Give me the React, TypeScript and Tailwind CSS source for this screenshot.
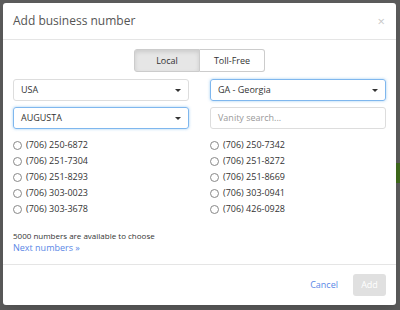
import React from "react";

const left = ["(706) 250-6872", "(706) 251-7304", "(706) 251-8293", "(706) 303-0023", "(706) 303-3678"];
const right = ["(706) 250-7342", "(706) 251-8272", "(706) 251-8669", "(706) 303-0941", "(706) 426-0928"];

const Caret = () => (
  <svg width="6" height="3" viewBox="0 0 6 3" className="shrink-0">
    <path d="M0 0h6L3 3z" fill="#333" />
  </svg>
);

const NumberList = ({ items }: { items: string[] }) => (
  <div className="flex flex-col">
    {items.map((n) => (
      <label key={n} className="flex items-center h-4 gap-[4px] text-[9px] text-[#333]">
        <span className="w-[9px] h-[9px] rounded-full border border-[#888] bg-white" />
        {n}
      </label>
    ))}
  </div>
);

export default function App() {
  return (
    <div className="w-[400px] h-[310px] bg-[#5b5b5b] relative overflow-hidden" style={{ fontFamily: "'Open Sans', sans-serif" }}>
      <div className="absolute right-0 top-[163px] w-[4px] h-[20px] bg-[#3f6a1c]" />
      <div className="absolute left-[3px] top-[3px] w-[393px] h-[302px] bg-white rounded-[3px] flex flex-col shadow-lg">
        <div className="h-[37px] flex items-center justify-between pl-[10px] pr-[11px] border-b border-[#e5e5e5]">
          <h2 className="text-[12px] text-[#555]">Add business number</h2>
          <span className="text-[13px] leading-none text-[#c8c8c8]">×</span>
        </div>
        <div className="flex-1 px-[10px] pt-[9px]">
          <div className="flex justify-center">
            <div className="flex h-[23px] text-[9px] text-[#333]">
              <button className="w-[66px] rounded-l-[3px] border border-[#ccc] bg-[#e6e6e6] shadow-[inset_0_2px_4px_rgba(0,0,0,0.12)]">Local</button>
              <button className="w-[65px] rounded-r-[3px] border border-l-0 border-[#ccc] bg-white">Toll-Free</button>
            </div>
          </div>
          <div className="grid grid-cols-2 gap-x-[21px] gap-y-[6px] mt-[7px]">
            <div className="h-[22px] rounded-[3px] border border-[#ddd] flex items-center justify-between px-[7px] text-[9px] text-[#333]">
              USA <Caret />
            </div>
            <div className="h-[22px] rounded-[3px] border border-[#7fb7ee] shadow-[0_0_3px_rgba(102,175,233,0.6)] flex items-center justify-between px-[7px] text-[9px] text-[#333]">
              GA - Georgia <Caret />
            </div>
            <div className="h-[22px] rounded-[3px] border border-[#7fb7ee] shadow-[0_0_3px_rgba(102,175,233,0.6)] flex items-center justify-between px-[7px] text-[9px] text-[#333]">
              AUGUSTA <Caret />
            </div>
            <div className="h-[22px] rounded-[3px] border border-[#ddd] flex items-center px-[7px] text-[9px] text-[#999]">
              Vanity search...
            </div>
          </div>
          <div className="grid grid-cols-2 gap-x-[21px] mt-[8px]">
            <NumberList items={left} />
            <NumberList items={right} />
          </div>
          <p className="mt-[13px] text-[8px] leading-[12px] text-[#333]">5000 numbers are available to choose</p>
          <a className="block text-[9px] text-[#5a87e6] leading-[12px]">Next numbers »</a>
        </div>
        <div className="h-[41px] border-t border-[#e5e5e5] flex items-center justify-end gap-[15px] pr-[10px]">
          <span className="text-[9px] text-[#5a87e6]">Cancel</span>
          <button className="w-[33px] h-[22px] rounded-[3px] bg-[#e0e0e0] text-[9px] text-white">Add</button>
        </div>
      </div>
    </div>
  );
}
